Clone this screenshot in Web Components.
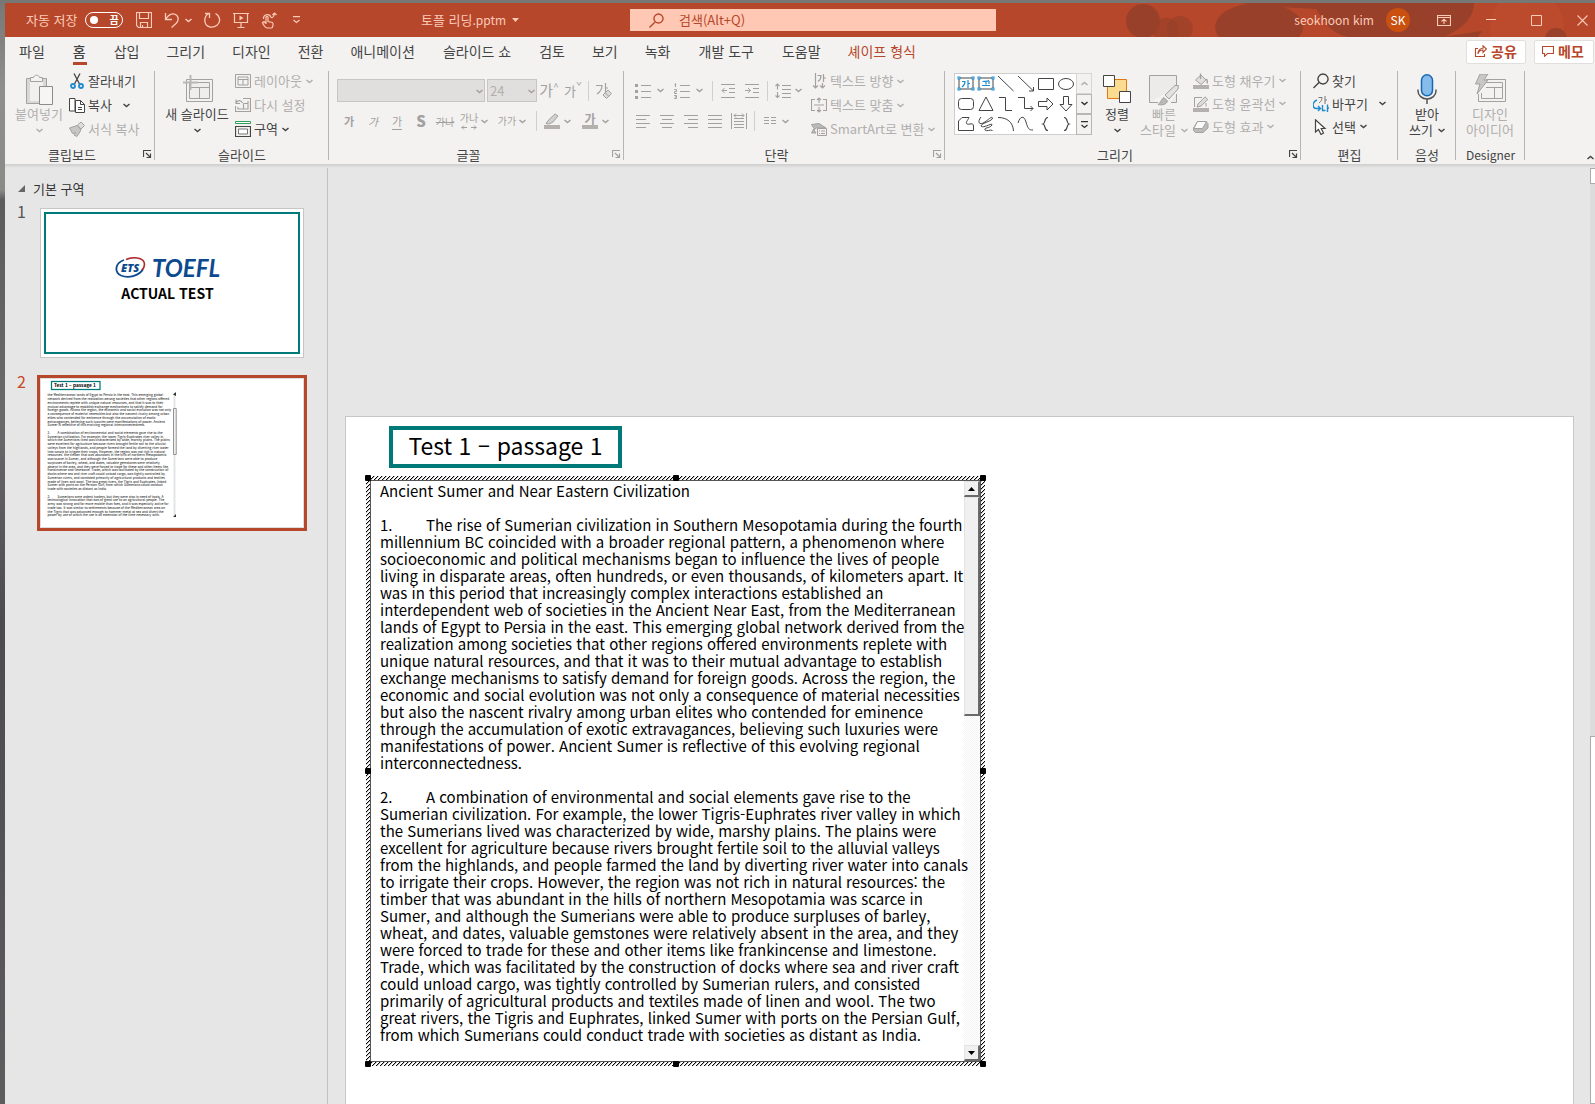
<!DOCTYPE html>
<html lang="ko">
<head>
<meta charset="utf-8">
<title>토플 리딩.pptm</title>
<style>
  html, body { margin: 0; height: 100%; }
  body {
    font-family: "Noto Sans CJK KR", "Noto Sans", sans-serif;
    font-size: 13px; line-height: 16px; color: #444; overflow: hidden;
    background: linear-gradient(180deg, #777876 0, #8f908d 90px, #8a8a88 190px, #5c5c5e 200px, #6a6a6d 420px, #4b4b50 620px, #5d5d60 100%);
  }
</style>
</head>
<body>
<ppt-window></ppt-window>
<script>
const G = '#a3a19f', D = '#444';
const line = (c, d, w = 1) => `<path d="${d}" fill="none" stroke="${c}" stroke-width="${w}"/>`;
const handles = ['2,3', '16,3', '2,14', '16,14'].map(p => { const [x, y] = p.split(','); return `<rect x="${x - 1}" y="${y - 1}" width="2" height="2" fill="#fff" stroke="#1e8bcd"/>`; }).join('');
const ICONS = {
  chev: [7, 5, `<path d="M.5 1 3.500 3.500 6.500 1" fill="none" stroke="currentColor" stroke-width="1.500"/>`],
  chevUp: [7, 5, `<path d="M.5 4 3.500 1.500 6.500 4" fill="none" stroke="currentColor" stroke-width="1.500"/>`],
  chevBar: [7, 8, `<path d="M0 .5H7M.5 4 3.500 6.500 6.500 4" fill="none" stroke="currentColor" stroke-width="1.300"/>`],
  caret: [7, 4, `<path d="M0 0H7L3.500 4Z" fill="currentColor"/>`],
  launch: [9, 9, line('currentColor', 'M.5 7V.5H8M3 3 7 7M7.500 3.500V7.500H3.500', 1.2)],
  save: [16, 16, line('currentColor', 'M.5.5H15.500V15.500H2.500L.5 13.500ZM3.500.5V6.500H12.500V.5M4.500 15.500V10.500H11.500V15.500M6.500 13V15', 1.2)],
  undo: [16, 16, line('currentColor', 'M1.500 1V7.500H8M1.500 7.500C4 3 8 .5 11.500 2.500 15.500 5 14.500 9 12 11.500L7.500 15.500', 1.3)],
  redo: [17, 16, line('currentColor', 'M5 1.500C-1 4.500-.5 13.500 6 15 11 16 16.500 12 15.500 7 15 4.500 13.500 2.500 11.500 1.500M1 1.500H5.500V6', 1.3)],
  present: [16, 17, line('currentColor', 'M0 1.500H16M1.500 1.500V10.500H14.500V1.500M8 10.500V15.500M4.500 15.500H11.500', 1.2) + '<path d="M6.500 3.500V8.500L10.500 6Z" fill="currentColor"/>'],
  touch: [16, 17, line('currentColor', 'M5 12V5.500C5 4 7 4 7 5.500V9.500L11.500 10.500C12.500 11 12 16 10.500 16H6C4.500 16 2 12.500 1.500 10.500L3 9.500 5 11.500M2.500 7A4 4 0 0 1 9 3.500C10 7 13 6 13.500 1.500M11.500 3 13.500 1 15.500 3', 1.2)],
  search: [15, 15, line('currentColor', 'M.5 14.500 5.800 9.200M9.500 1A4.500 4.500 0 1 1 9.490 1Z', 1.4)],
  ribbonOpt: [14, 11, line('currentColor', 'M.5.5H13.500V10.500H.5ZM.5 2.500H13.500M7 9V4.500M4.500 6.500 7 4.200 9.500 6.500', 1.1)],
  min: [10, 10, line('currentColor', 'M0 4.500H10')],
  max: [11, 11, line('currentColor', 'M.5.5H10.500V10.500H.5Z')],
  close: [11, 11, line('currentColor', 'M.5.5 10.500 10.500M10.500.5.5 10.500', 1.1)],
  share: [13, 13, line('currentColor', 'M4 3.500H1.500V11.500H10.500V9M4 9C4.500 6 7 5 9 5V7.500L12.500 4 9 .8V3.200C6 3.200 4 5.500 4 9Z', 1.1)],
  memo: [12, 11, line('currentColor', 'M.5.5H11.500V7.500H5.500L2.500 10.300V7.500H.5Z', 1.1)],
  paste: [28, 32, `<path d="M1.500 4.500H21.500V29.500H1.500Z" fill="#d9d8d7" stroke="${G}"/><path d="M5 7H18V27H5Z" fill="#f1f0ef"/><path d="M5.500 7.500V3.500H8.500C9 .5 14 .5 14.500 3.500H17.500V7.500Z" fill="#f3f2f1" stroke="${G}"/><path d="M14.500 12.500H27.500V30.500H14.500Z" fill="#f6f5f4" stroke="#8d8b89"/>`],
  cut: [16, 16, line(D, 'M5 .5 10.500 11M11 .5 5.500 11', 1.3) + `<g fill="none" stroke="#1e8bcd" stroke-width="1.800"><circle cx="4" cy="13" r="2"/><circle cx="12" cy="13" r="2"/></g>`],
  copy: [16, 16, `<path d="M6 14H.5V1.500H4L6 1.500V14" fill="#fff" stroke="${D}"/><path d="M6.500 3.500H11.500L15.500 7.500V15.500H6.500Z" fill="#fff" stroke="${D}"/>` + line(D, 'M11.500 3.500V7.500H15.500M9 10.500H13M9 12.500H13')],
  brush: [16, 16, `<path d="M.5 7 8 4.500 12 9 8 15.500 5 14 6.500 11.500 3.500 12.500Z" fill="#c9c7c5" stroke="${G}"/><path d="M8.500 4 12 1 15.500 4.500 12 8Z" fill="#dedddc" stroke="${G}"/>`],
  newSlide: [32, 32, `<path d="M5.500 5.500H31.500V27.500H5.500Z" fill="#f3f2f1" stroke="${G}"/><path d="M8.500 8.500H28.500V24.500H8.500Z" fill="#efeeed" stroke="${G}"/>` + line(G, 'M8.500 13.500H28.500M18.500 13.500V24.500') + line('#b9b7b5', 'M2 8.500H17M9.500 1V16', 2)],
  layout: [16, 14, line(G, 'M.5.5H15.500V13.500H.5ZM3 3H13V11H3ZM3 5.500H13M8 5.500V11')],
  reset: [16, 14, line(G, 'M8 .5H15.500V13.500H.5V8M13 3V11H3V9M8.500 5.500H13M8.500 5.500V11M1 5.500C2 2 6 1.500 7.500 5M1 1.500V5.500H5', 1.1)],
  section: [16, 16, `<path d="M.5.5H15.500V2.500H.5Z" fill="#fff" stroke="#2f9e5b"/>` + line(D, 'M.5 5.500H15.500V15.500H.5Z', 1.2) + `<path d="M3.500 8H12.500V13H3.500Z" fill="#fff" stroke="#777"/>`],
  clearFmt: [16, 16, line(G, 'M0 2.500H6C6 6 4 9 1 11M9.500 0V9M9.500 5H12', 1.2) + `<path d="M7 12 12 7 15.500 10.500 10.500 15.500Z" fill="#dcdbda" stroke="${G}"/>` + line(G, 'M9 9.500 13 13.500')],
  pen: [16, 16, `<path d="M2 10.500 5 6.500 11 1 14 3 9 9 5 11Z" fill="#d3d1cf" stroke="${G}"/><path d="M0 12H16V16H0Z" fill="#b3b0ad"/>`],
  bullets: [16, 16, [1, 7, 13].map(y => `<rect x="0" y="${y}" width="3" height="3" fill="${G}"/>` + line(G, `M6 ${y + 1.5}H16`)).join('')],
  numbers: [16, 16, line(G, 'M.5 1.500 1.500.5V4M.2 6.500H2.500V8.500H.5V10.500H3M.2 12.500H2.500V15.500H.2M.8 14H2.500M6 2.500H16M6 8.500H16M6 14.500H16')],
  outdent: [16, 16, line(G, 'M1 1.500H15M9 5.500H15M9 9.500H15M1 14.500H15M2 7.500H7M4.500 5 2 7.500 4.500 10')],
  indent: [16, 16, line(G, 'M1 1.500H15M9 5.500H15M9 9.500H15M1 14.500H15M1 7.500H6M4 5 6.500 7.500 4 10')],
  spacing: [16, 16, line(G, 'M7 2.500H16M7 6.500H16M7 10.500H16M7 14.500H16M2.500 1V6.500M.5 3 2.500 1 4.500 3M2.500 9V14.500M.5 12.500 2.500 14.500 4.500 12.500', 1.1)],
  left: [16, 16, line(G, 'M1 2.500H15M1 6.500H11M1 10.500H15M1 14.500H11')],
  center: [16, 16, line(G, 'M1 2.500H15M3 6.500H13M1 10.500H15M3 14.500H13')],
  right: [16, 16, line(G, 'M1 2.500H15M5 6.500H15M1 10.500H15M5 14.500H15')],
  justify: [16, 16, line(G, 'M1 2.500H15M1 6.500H15M1 10.500H15M1 14.500H15')],
  distribute: [16, 16, line(G, 'M.5 0V16M15.500 0V16M3 5.500H13M3 8.500H13M3 11.500H13M3 14.500H13M3 2.500H13M5 .5 3 2.500 5 4.500M11 .5 13 2.500 11 4.500')],
  columns: [14, 8, line(G, 'M1 .5H6M1 3.500H6M1 6.500H6M8 .5H13M8 3.500H13M8 6.500H13')],
  spread: [16, 5, line(G, 'M.5 2.500H6M10 2.500H15.500M3 .5 1 2.500 3 4.500M13 .5 15 2.500 13 4.500')],
  textDir: [16, 16, line(G, 'M4.500 0V14.500M2 12.500 4.500 15 7 12.500M11.500 10V15M9 12.500 11.500 15 14 12.500M6.500 2.500H10C10 5 9 7 7 8.500M12.500 1V9M12.500 5H15', 1.2)],
  textAlign: [16, 16, line(G, 'M4 2.500H.5V13.500H4M12 2.500H15.500V13.500H12M3 8H13M8 1V6M8 10V15M6 3 8 1 10 3M6 13 8 15 10 13', 1.1)],
  smartart: [16, 14, `<path d="M.5 2.500 8 1.500 15 6H5L3 8 5 11H.5L3 6.500Z" fill="#bdbbb9" stroke="${G}"/><path d="M6.500 6.500H15.500V13.500H6.500Z" fill="#f3f2f1" stroke="${G}"/>` + line(G, 'M8 9H9M10 9H14M8 11.500H9M10 11.500H14')],
  arrange: [28, 32, `<path d="M4.500 5.500H23.500V24.500H4.500Z" fill="#fbdb8f" stroke="#e07a10"/><path d="M.5 1.500H11.500V12.500H.5ZM16.500 17.500H27.500V28.500H16.500Z" fill="#fff" stroke="${D}"/>`],
  quick: [30, 32, `<path d="M.5 28.500V1.500H27.500V13M27.500 20V28.500H22M.5 28.500H9" fill="#ecebea" stroke="${G}"/><path d="M16 21 26 11.500 29.500 11.500 29 15 20 25Z" fill="#e3e2e1" stroke="${G}"/><path d="M9 30.500C12 29 12 25 15 23.500L18.500 27C17.500 30.500 13 31.500 9 30.500Z" fill="#bbb9b7" stroke="${G}"/>`],
  fill: [16, 16, `<path d="M2.500 7 8 2 13 7 8 11.500Z" fill="#e0dfde" stroke="${G}"/>` + line(G, 'M7.500 6V.5M13 6C15 7 14.500 9 14 10.500', 1.3) + `<path d="M0 12H16V16H0Z" fill="#b3b0ad"/>`],
  outline: [16, 16, line(G, 'M9 1.500H1.500V11M13 7V10.500') + `<path d="M4 11 5 8 12 .8 14.800 3.500 8 10Z" fill="#dddcdb" stroke="${G}"/><path d="M0 12H16V16H0Z" fill="#b3b0ad"/>`],
  effect: [16, 14, `<path d="M4.500 1.500H13L15 3.500V8L10 12.500H2.500L.5 10.500V8Z" fill="#bdbbb9" stroke="${G}"/><path d="M4.500 1.500H13.500L9.500 8.500H.8Z" fill="#fafafa" stroke="${G}"/>`],
  find: [16, 16, line(D, 'M.5 15 6 9.500M10 1A5 5 0 1 1 9.990 1Z', 1.4)],
  replace: [16, 16, line('#777', 'M5.500 1.500H9C9 4 8 5.500 6 7M12 0V8M12 4H14') + line('#1e8bcd', 'M4 4C-1 6-1 12 3 12.500H7M5 10 7.500 12.500 5 15M9.500 9V14.500H12.500M14.500 8.500V16M14.500 12H16', 1.4)],
  select: [16, 16, `<path d="M2.500.8V13L5.500 10.500 8 15.500 10.500 14 8.200 9.500H12Z" fill="#fff" stroke="${D}" stroke-width="1.200"/>`],
  mic: [20, 32, `<rect x="4.500" y=".8" width="11" height="21" rx="5.500" fill="#86bcec" stroke="#1668b3" stroke-width="1.500"/>` + line('#555', 'M1 15.500V17A9 8 0 0 0 19 17V15.500M10 25V30', 1.5)],
  designer: [32, 32, line(G, 'M12 5.500H31.500V27.500H4.500V20M12 8.500H28.500V24.500H7.500V19M12 13.500H28.500M20.500 13.500V24.500') + `<path d="M6 0 14 0 10 6 14 6 3 20 6 10 1.500 10Z" fill="#c9c7c5" stroke="${G}"/>`],
  tbox: [18, 18, `<path d="M2 3H16V14H2Z" fill="#fff" stroke="${D}"/>${handles}` + line('#1e8bcd', 'M5 6.500H8C8 9 7 10.500 5 12M11 5V13M11 8.500H13', 1.2)],
  vbox: [18, 18, `<path d="M2 3H16V14H2Z" fill="#fff" stroke="${D}"/>${handles}` + line('#1e8bcd', 'M5.500 6.500C8 6 10 7 12 5.500M9 6.500V9.500M12 6V9M5 10.500H13', 1.2)],
  ln: [18, 18, line(D, 'M1 1 16.500 16')],
  lnArrow: [18, 18, line(D, 'M1 1 16 15.500M16.500 12V16H12')],
  rect: [18, 18, `<path d="M1.500 3.500H16.500V14.500H1.500Z" fill="#fff" stroke="${D}"/>`],
  oval: [18, 18, `<ellipse cx="9" cy="9" rx="7.500" ry="5.500" fill="#fff" stroke="${D}"/>`],
  rrect: [18, 18, `<rect x="1.500" y="3.500" width="15" height="11" rx="3" fill="#fff" stroke="${D}"/>`],
  tri: [18, 18, `<path d="M9 2 16 15.500H2Z" fill="#fff" stroke="${D}"/>`],
  elbow: [18, 18, line(D, 'M2 2.500H8.500V15.500H15')],
  elbowA: [18, 18, line(D, 'M1 2.500H7.500V13.500H16M13.500 11 16 13.500 13.500 16')],
  arrR: [18, 18, `<path d="M1.500 6.500H10V3L16 9 10 15V11.500H1.500Z" fill="#fff" stroke="${D}"/>`],
  arrD: [18, 18, `<path d="M6.500 1.500V9.500H3L9 16 15 9.500H11.500V1.500Z" fill="#fff" stroke="${D}"/>`],
  free: [18, 18, `<path d="M1.500 15.500V6L5 2.500H12C11 5 8 8 10 9 12 10 16.500 7 16.500 11V15.500Z" fill="#fff" stroke="${D}"/>`],
  scrib: [18, 18, line(D, 'M4 2C0 7 2 11 8 7 12 4 15 1 15.500 3 16 6 4 8 4 11 6 14 16 7 15 10 12 14 7 12 8 15 10 17 13 14 15.500 15.500')],
  arc: [18, 18, line(D, 'M1 2.500C10 2.500 16 7 16.500 16')],
  curve: [18, 18, line(D, 'M1 8C3 1 7 0 9 7 11 14 12 15 16 15')],
  braceL: [18, 18, line(D, 'M11 2.500C7 2 9 8 6 9 9 10 7 16 11 15.500', 1.2)],
  braceR: [18, 18, line(D, 'M7 2.500C11 2 9 8 12 9 9 10 11 16 7 15.500', 1.2)],
};

function define(name, html, after) {
  const t = document.createElement('template');
  customElements.define(name, class extends HTMLElement {
    constructor() { super(); this.attachShadow({ mode: 'open' }); }
    connectedCallback() {
      if (this.shadowRoot.childNodes.length) return;
      t.innerHTML = typeof html === 'function' ? html(this) : html;
      this.shadowRoot.append(t.content.cloneNode(true));
      if (after) after(this);
    }
  });
}
const BTN = 'button{font:inherit;color:inherit;background:none;border:0;padding:0;margin:0;text-align:inherit}';
const ico = n => `<ui-icon name="${n}"></ui-icon>`;

define('ui-icon', el => {
  const [w, h, m] = ICONS[el.getAttribute('name')];
  return `<style>:host{display:block;flex:none}svg{display:block}</style><svg width="${w}" height="${h}" viewBox="0 0 ${w} ${h}" aria-hidden="true">${m}</svg>`;
});

/* Small ribbon command: icon, caption, optional menu arrow */
define('rb-cmd', el => `<style>:host{display:block;height:var(--row,24px)}:host([off]){color:#b1afad}
  ${BTN}button{display:flex;align-items:center;box-sizing:border-box;height:100%;padding:0 0 2px 4px;white-space:nowrap}
  .i{width:19px}.m{margin-left:4px}:host([wide]) .m{margin-left:11px}</style>
  <button type="button"><span class="i">${ico(el.getAttribute('icon'))}</span><slot></slot>${el.hasAttribute('menu') ? `<span class="m">${ico('chev')}</span>` : ''}</button>`);

/* Large ribbon command: picture above one or two caption lines */
define('rb-big', el => `<style>:host{display:block;width:var(--w,52px);flex:none}:host([off]){color:#b1afad}
  ${BTN}button{display:flex;flex-direction:column;align-items:center;width:100%;padding-top:4px;white-space:nowrap}
  .p{height:32px}.l2{display:flex;align-items:center;gap:5px;height:16px}</style>
  <button type="button"><span class="p">${ico(el.getAttribute('icon'))}</span><slot></slot><span class="l2"><slot name="l2"></slot>${el.hasAttribute('menu') ? ico('chev') : ''}</span></button>`);

/* Icon-only tool, optionally split with a menu arrow */
define('rb-tool', el => `<style>:host{display:block;flex:none;height:24px;color:#a3a19f}
  ${BTN}button{display:flex;align-items:center;justify-content:center;width:24px;height:24px}
  :host([menu]) button{justify-content:flex-start;padding-left:4px;width:var(--split,38px);gap:var(--gap,4px)}
  :host([menu]) .i{width:16px;display:flex;justify-content:center}</style>
  <button type="button" aria-label="${el.getAttribute('label') || ''}"><span class="i">${el.hasAttribute('icon') ? ico(el.getAttribute('icon')) : '<slot></slot>'}</span>${el.hasAttribute('menu') ? ico('chev') : ''}</button>`);

define('rb-sep', '<style>:host{display:block;flex:none;width:1px;height:20px;margin:0 3px;background:#d2d0ce}</style>');

define('rb-group', el => `<style>:host{display:flex;flex-direction:column;flex:none;box-sizing:border-box;padding-top:4px;height:98px;position:relative;width:${el.getAttribute('width')}px}
  .c{display:flex;height:75px;align-items:flex-start;padding-left:var(--pad,8px)}
  .f{display:flex;height:19px;align-items:center}.t{flex:1;text-align:center}:host([latin]) .t{font-size:12px}
  ${BTN}.go{width:16px;display:flex;justify-content:center}:host([dim]) .go{color:#a3a19f}
  i{position:absolute;right:0;top:5px;bottom:4px;width:1px;background:#b8b6b4}</style>
  <div class="c"><slot></slot></div><div class="f"><span class="t">${el.getAttribute('label')}</span>${el.hasAttribute('go') ? `<button class="go" type="button" aria-label="${el.getAttribute('label')} 옵션">${ico('launch')}</button>` : ''}</div><i></i>`);

define('ppt-titlebar', `<style>:host{display:flex;align-items:center;height:34px;background:#b7472a;color:#fbcab8;position:relative;overflow:hidden}
  ${BTN}.art{position:absolute;right:0;top:0}
  .qat{display:flex;align-items:center;width:416px;flex:none;padding-left:21px;box-sizing:border-box}
  .sw{display:flex;align-items:center;gap:8px}
  .sw input{appearance:none;margin:0;width:8px;height:8px;border-radius:50%;background:#fff}
  .pill{display:flex;align-items:center;gap:11px;box-sizing:border-box;width:38px;height:16px;padding-left:4px;border:1px solid #fff;border-radius:8px;color:#fff;font-size:10px;font-weight:700;line-height:12px}
  .tools{display:flex;align-items:center;gap:12px;margin-left:13px}.u{display:flex;align-items:center;gap:5px}
  .last{margin-left:4px}
  .name{display:flex;align-items:center;gap:6px;width:209px;flex:none}.name b{font-weight:400}.name span{font-size:12px}
  .find{display:flex;align-items:center;gap:15px;width:366px;height:22px;flex:none;box-sizing:border-box;padding-left:19px;background:#ffc8b4;color:#b7472a}
  .find input{flex:1;border:0;background:none;outline:0;padding:0;font:inherit;color:inherit}.find input::placeholder{color:#b7472a;opacity:1}
  .me{display:flex;align-items:center;margin-left:auto;position:relative;font-size:12px}
  .av{display:grid;place-items:center;width:24px;height:24px;border-radius:50%;background:#ca5010;color:#fff;margin:0 27px 0 12px}
  .win{display:flex;align-items:center;gap:35px;margin-right:7px}</style>
  <svg class="art" width="505" height="34" viewBox="0 0 505 34" aria-hidden="true">
   <path d="M0 0H505V34H0Z" fill="#b7472a"/><circle cx="437" cy="24" r="37" fill="#c04c2e" opacity=".6"/><g fill="#99402a"><circle cx="53" cy="18" r="17"/><circle cx="76" cy="28" r="13" opacity=".7"/><circle cx="90" cy="26" r="13" opacity=".7"/><ellipse cx="169" cy="24" rx="44" ry="24"/><path d="M150 0H384C384 14 374 25 354 34H258C238 30 232 14 226 6L190 4ZM352 34 392 28 388 34Z"/><circle cx="466" cy="36" r="11"/></g></svg>
  <div class="qat"><label class="sw">자동 저장<span class="pill"><input type="checkbox" role="switch">끔</span></label>
   <div class="tools"><button type="button" aria-label="저장">${ico('save')}</button><button class="u" type="button" aria-label="실행 취소">${ico('undo')}${ico('chev')}</button><button type="button" aria-label="다시 실행">${ico('redo')}</button><button type="button" aria-label="슬라이드 쇼">${ico('present')}</button><button type="button" aria-label="터치 모드">${ico('touch')}</button><button class="last" type="button" aria-label="사용자 지정">${ico('chevBar')}</button></div></div>
  <button class="name" type="button"><b>토플 리딩<span>.pptm</span></b> ${ico('caret')}</button>
  <label class="find">${ico('search')}<input type="search" aria-label="검색" placeholder="검색(Alt+Q)"></label>
  <div class="me"><span>seokhoon kim</span><span class="av">SK</span>
   <div class="win"><button type="button" aria-label="리본 표시 옵션">${ico('ribbonOpt')}</button><button type="button" aria-label="최소화">${ico('min')}</button><button type="button" aria-label="최대화">${ico('max')}</button><button type="button" aria-label="닫기">${ico('close')}</button></div></div>`);

define('ppt-tabs', `<style>:host{display:flex;align-items:center;height:29px;font-size:14px}
  nav{display:flex;flex:1}a{color:inherit;text-decoration:none;padding:0 14px;height:29px;line-height:28px;position:relative;white-space:nowrap}
  a:nth-child(n+4){padding:0 14px 0 13px}a.w:nth-child(n+4){padding:0 15px 0 14px}
  .on{font-weight:500}.on::after{content:"";position:absolute;left:14px;right:13px;bottom:1px;height:3px;background:#b7472a}.ctx{color:#b7472a}
  ${BTN}.b{display:flex;align-items:center;gap:4px;box-sizing:border-box;width:60px;height:24px;line-height:20px;padding:0 0 1px 7px;margin-left:8px;border:1px solid #e1dfdd;border-radius:2px;background:#fff;color:#b7472a;font-weight:700}
  .b:last-child{margin-right:1px}</style>
  <nav><a href="#">파일</a><a href="#" class="on">홈</a><a href="#">삽입</a><a href="#">그리기</a><a href="#">디자인</a><a href="#">전환</a><a href="#">애니메이션</a><a href="#" class="w">슬라이드 쇼</a><a href="#">검토</a><a href="#">보기</a><a href="#">녹화</a><a href="#" class="w">개발 도구</a><a href="#">도움말</a><a href="#" class="ctx">셰이프 형식</a></nav>
  <button class="b" type="button">${ico('share')}공유</button><button class="b" type="button">${ico('memo')}메모</button>`);

define('shape-gallery', () => {
  const s = ['tbox', 'vbox', 'ln', 'lnArrow', 'rect', 'oval', 'rrect', 'tri', 'elbow', 'elbowA', 'arrR', 'arrD', 'free', 'scrib', 'arc', 'curve', 'braceL', 'braceR'];
  return `<style>:host{display:flex;flex:none;margin-top:3px;height:62px;width:138px;box-sizing:border-box}${BTN}
  .g{display:grid;grid-template-columns:repeat(6,20px);grid-auto-rows:20px;border:1px solid #d0cecc;border-right:0;background:#fff;padding-left:1px}
  .g button{display:grid;place-items:center}.s{display:grid;flex:1;grid-template-rows:1fr 1fr 1fr}.s button{display:grid;place-items:center;border:1px solid #b8b6b4;color:#333}.s button:first-child{border-color:#d8d6d4;color:#b1afad}</style>
  <div class="g">${s.map(n => `<button type="button" aria-label="${n}">${ico(n)}</button>`).join('')}</div>
  <div class="s"><button type="button" aria-label="위로">${ico('chevUp')}</button><button type="button" aria-label="아래로">${ico('chev')}</button><button type="button" aria-label="자세히">${ico('chevBar')}</button></div>`;
});

define('font-select', el => `<style>:host{display:block;position:relative;width:var(--w);height:23px;flex:none;color:#a3a19f}
  select{appearance:none;width:100%;height:100%;box-sizing:border-box;border:1px solid #c8c6c4;border-radius:0;background:#e1dfdd;color:#b1afad;font:inherit;line-height:20px;padding:0 0 0 2px;opacity:1}
  ui-icon{position:absolute;right:2px;top:10px;pointer-events:none}</style>
  <select disabled aria-label="${el.getAttribute('label')}"><option>${el.getAttribute('value')}</option></select>${ico('chev')}`);

define('ppt-ribbon', `<style>:host{display:flex;height:98px;position:relative}
  .col{display:flex;flex-direction:column}.rows{display:flex;flex-direction:column;gap:7px;padding-top:9px}.r{display:flex;align-items:center;height:23px}.r+.r{height:24px}
  .k{font-size:11px;line-height:13px}.b{font-weight:700}.i{font-style:italic}.u{border-bottom:1px solid #a3a19f}.st{font-size:10px;text-decoration:line-through;white-space:nowrap}
  .sm{font-size:10px;white-space:nowrap;line-height:12px}.sp{display:flex;flex-direction:column;align-items:center;gap:2px;font-size:10px;line-height:11px;white-space:nowrap}
  .s{font-weight:900;font-size:15px}.big{font-size:15px}.ar{font-size:10px;vertical-align:5px;line-height:8px}.clr{font-weight:700;font-size:12px;line-height:12px;border-bottom:4px solid #b3b0ad;width:16px;text-align:center;display:block}
  ${BTN}.up{position:absolute;right:0;bottom:4px;width:8px;overflow:hidden}</style>
  <rb-group label="클립보드" width="150" go>
    <rb-big icon="paste" off menu>붙여넣기</rb-big>
    <div class="col"><rb-cmd icon="cut">잘라내기</rb-cmd><rb-cmd icon="copy" menu wide>복사</rb-cmd><rb-cmd icon="brush" off>서식 복사</rb-cmd></div>
  </rb-group>
  <rb-group label="슬라이드" width="174">
    <rb-big icon="newSlide" menu style="--w:68px">새 슬라이드</rb-big>
    <div class="col"><rb-cmd icon="layout" off menu>레이아웃</rb-cmd><rb-cmd icon="reset" off>다시 설정</rb-cmd><rb-cmd icon="section" menu>구역</rb-cmd></div>
  </rb-group>
  <rb-group label="글꼴" width="295" go dim>
    <div class="rows">
      <div class="r"><font-select label="글꼴" value="" style="--w:148px"></font-select><font-select label="글꼴 크기" value="24" style="--w:50px;margin-left:2px"></font-select><rb-tool><span class="big">가<span class="ar">^</span></span></rb-tool><rb-tool><span>가<span class="ar">ˇ</span></span></rb-tool><rb-sep></rb-sep><rb-tool icon="clearFmt" label="서식 지우기"></rb-tool></div>
      <div class="r"><rb-tool><span class="k b">가</span></rb-tool><rb-tool><span class="k i">가</span></rb-tool><rb-tool><span class="k u">가</span></rb-tool><rb-tool><span class="s">S</span></rb-tool><rb-tool><span class="st">가나</span></rb-tool><rb-tool menu><span class="sp">가나${ico('spread')}</span></rb-tool><rb-tool menu><span class="sm">가가</span></rb-tool><rb-sep></rb-sep><rb-tool icon="pen" label="강조 색" menu></rb-tool><rb-tool menu><span class="clr">가</span></rb-tool></div>
    </div>
  </rb-group>
  <rb-group label="단락" width="321" go dim style="--pad:7px">
    <div class="rows" style="width:176px">
      <div class="r"><rb-tool icon="bullets" label="글머리 기호" menu style="--split:39px;--gap:6px"></rb-tool><rb-tool icon="numbers" label="번호 매기기" menu style="--split:39px;--gap:6px"></rb-tool><rb-sep></rb-sep><rb-tool icon="outdent" label="내어쓰기"></rb-tool><rb-tool icon="indent" label="들여쓰기"></rb-tool><rb-sep></rb-sep><rb-tool icon="spacing" label="줄 간격" menu></rb-tool></div>
      <div class="r"><rb-tool icon="left" label="왼쪽 맞춤"></rb-tool><rb-tool icon="center" label="가운데 맞춤"></rb-tool><rb-tool icon="right" label="오른쪽 맞춤"></rb-tool><rb-tool icon="justify" label="양쪽 맞춤"></rb-tool><rb-tool icon="distribute" label="균등 분할"></rb-tool><rb-sep></rb-sep><rb-tool icon="columns" label="단" menu></rb-tool></div>
    </div>
    <div class="col"><rb-cmd icon="textDir" off menu>텍스트 방향</rb-cmd><rb-cmd icon="textAlign" off menu>텍스트 맞춤</rb-cmd><rb-cmd icon="smartart" off menu>SmartArt로 변환</rb-cmd></div>
  </rb-group>
  <rb-group label="그리기" width="356" go style="--pad:9px;--row:23px">
    <shape-gallery></shape-gallery>
    <rb-big icon="arrange" menu style="--w:44px;margin-left:3px">정렬</rb-big>
    <rb-big icon="quick" off menu style="--w:50px">빠른<span slot="l2">스타일</span></rb-big>
    <div class="col"><rb-cmd icon="fill" off menu>도형 채우기</rb-cmd><rb-cmd icon="outline" off menu>도형 윤곽선</rb-cmd><rb-cmd icon="effect" off menu>도형 효과</rb-cmd></div>
  </rb-group>
  <rb-group label="편집" width="97" style="--row:23px">
    <div class="col"><rb-cmd icon="find">찾기</rb-cmd><rb-cmd icon="replace" menu wide>바꾸기</rb-cmd><rb-cmd icon="select" menu>선택</rb-cmd></div>
  </rb-group>
  <rb-group label="음성" width="58" style="--pad:3px"><rb-big icon="mic" menu>받아<span slot="l2">쓰기</span></rb-big></rb-group>
  <rb-group label="Designer" latin width="69" style="--pad:8px"><rb-big icon="designer" off>디자인<span slot="l2">아이디어</span></rb-big></rb-group>
  <button class="up" type="button" aria-label="리본 축소">${ico('chevUp')}</button>`);

const P1 = `1.	The rise of Sumerian civilization in Southern Mesopotamia during the fourth
millennium BC coincided with a broader regional pattern, a phenomenon where
socioeconomic and political mechanisms began to influence the lives of people
living in disparate areas, often hundreds, or even thousands, of kilometers apart. It
was in this period that increasingly complex interactions established an
interdependent web of societies in the Ancient Near East, from the Mediterranean
lands of Egypt to Persia in the east. This emerging global network derived from the
realization among societies that other regions offered environments replete with
unique natural resources, and that it was to their mutual advantage to establish
exchange mechanisms to satisfy demand for foreign goods. Across the region, the
economic and social evolution was not only a consequence of material necessities
but also the nascent rivalry among urban elites who contended for eminence
through the accumulation of exotic extravagances, believing such luxuries were
manifestations of power. Ancient Sumer is reflective of this evolving regional
interconnectedness.`;
const P2 = `2.	A combination of environmental and social elements gave rise to the
Sumerian civilization. For example, the lower Tigris-Euphrates river valley in which
the Sumerians lived was characterized by wide, marshy plains. The plains were
excellent for agriculture because rivers brought fertile soil to the alluvial valleys
from the highlands, and people farmed the land by diverting river water into canals
to irrigate their crops. However, the region was not rich in natural resources: the
timber that was abundant in the hills of northern Mesopotamia was scarce in
Sumer, and although the Sumerians were able to produce surpluses of barley,
wheat, and dates, valuable gemstones were relatively absent in the area, and they
were forced to trade for these and other items like frankincense and limestone.
Trade, which was facilitated by the construction of docks where sea and river craft
could unload cargo, was tightly controlled by Sumerian rulers, and consisted
primarily of agricultural products and textiles made of linen and wool. The two
great rivers, the Tigris and Euphrates, linked Sumer with ports on the Persian Gulf,
from which Sumerians could conduct trade with societies as distant as India.`;
const MINI = `the Mediterranean lands of Egypt to Persia in the east. This emerging global
network derived from the realization among societies that other regions offered
environments replete with unique natural resources, and that it was to their
mutual advantage to establish exchange mechanisms to satisfy demand for
foreign goods. Across the region, the economic and social evolution was not only
a consequence of material necessities but also the nascent rivalry among urban
elites who contended for eminence through the accumulation of exotic
extravagances, believing such luxuries were manifestations of power. Ancient
Sumer is reflective of this evolving regional interconnectedness.

2.	A combination of environmental and social elements gave rise to the
Sumerian civilization. For example, the lower Tigris-Euphrates river valley in
which the Sumerians lived was characterized by wide, marshy plains. The plains
were excellent for agriculture because rivers brought fertile soil to the alluvial
valleys from the highlands, and people farmed the land by diverting river water
into canals to irrigate their crops. However, the region was not rich in natural
resources: the timber that was abundant in the hills of northern Mesopotamia
was scarce in Sumer, and although the Sumerians were able to produce
surpluses of barley, wheat, and dates, valuable gemstones were relatively
absent in the area, and they were forced to trade for these and other items like
frankincense and limestone. Trade, which was facilitated by the construction of
docks where sea and river craft could unload cargo, was tightly controlled by
Sumerian rulers, and consisted primarily of agricultural products and textiles
made of linen and wool. The two great rivers, the Tigris and Euphrates, linked
Sumer with ports on the Persian Gulf, from which Sumerians could conduct
trade with societies as distant as India.

3.	Sumerians were ardent traders, but they were also in need of tools. A
technological innovation that was of great use to an agricultural people. The
army was strong and far more mobile than foes, and it was especially active for
trade too. It was similar to settlements because of the Mediterranean area on
the Tigris that was advanced enough to hammer metal at sea and divert the
power by use of which the use is an extension of the time necessary with.`;

define('slide-list', `<style>:host{display:block;width:323px;flex:none;box-sizing:border-box;border-right:1px solid #c0c0c0;padding:12px 20px 0 12px}
  h2{display:flex;align-items:center;gap:8px;margin:0 0 8px 1px;font:inherit;color:#333;height:17px}
  .row{display:flex}.n{width:20px;flex:none;font-size:16px;line-height:12px;color:#555}
  .t{box-sizing:border-box;width:270px;height:156px;border:3px solid transparent}
  .f{box-sizing:border-box;width:264px;height:150px;background:#fff;border:1px solid #c6c6c6}
  .one .f{padding:3px}.in{box-sizing:border-box;height:142px;border:2px solid #007a78;display:flex;flex-direction:column;align-items:center;padding:42px 9px 0 0}
  .two{margin-top:14px}.two .n{color:#c8472a}.two .t{border-color:#b7472a}.two .f{border-color:#ddd}
  .logo{display:flex;align-items:center;gap:5px;height:24px}.logo b{font:italic 700 24px/24px Lato,sans-serif;color:#0b4a8f}
  .logo svg{display:block}strong{font-size:14px;line-height:26px;color:#000}.mini{display:block}</style>
  <h2><svg width="7" height="7" viewBox="0 0 7 7"><path d="M7 0V7H0Z" fill="#666"/></svg>기본 구역</h2>
  <div class="row one"><span class="n">1</span><div class="t"><div class="f"><div class="in">
    <div class="logo"><svg width="32" height="22" viewBox="0 0 32 22"><path d="M9 3C0 6-1 15 6 18.500 14 22 25 18 28 12" fill="none" stroke="#0b4a8f" stroke-width="1.800"/><path d="M11 2.500C18-.5 27 .5 29 5 30 8 29 11 27 13" fill="none" stroke="#b02a30" stroke-width="1.600"/><text x="6" y="15" font-family="Open Sans" font-size="11" font-weight="800" font-style="italic" fill="#0b4a8f">ETS</text></svg><b>TOEFL</b></div>
    <strong>ACTUAL TEST</strong></div></div></div></div>
  <div class="row two"><span class="n">2</span><div class="t"><div class="f"><svg class="mini" width="262" height="148" viewBox="4 4 1048 592">
    <rect x="46" y="14" width="194" height="32" fill="#fff" stroke="#007a78" stroke-width="5"/><text x="56" y="36" font-size="19" font-weight="700">Test 1 – passage 1</text>
    <g id="m" font-size="13" fill="#000"></g>
    <path d="M538 60V556" stroke="#e4e4e4" stroke-width="8"/><path d="M534 122H545V306H534Z" fill="#eee" stroke="#777" stroke-width="3"/><path d="M532 66 544 56V72ZM532 556H544V544" fill="#333"/></svg></div></div></div>`, el => {
  const g = el.shadowRoot.getElementById('m');
  MINI.split('\n').forEach((t, i) => {
    const [n, rest] = t.includes('\t') ? t.split('\t') : ['', t];
    const put = (x, s) => { const e = document.createElementNS('http://www.w3.org/2000/svg', 'text'); e.setAttribute('x', x); e.setAttribute('y', 73 + i * 15); e.textContent = s; g.append(e); };
    if (n) put(30, n);
    if (rest) put(n ? 70 : 30, rest);
  });
});

/* Text box control placed on the slide, shown selected */
define('passage-box', el => `<style>:host{display:block;position:relative;box-sizing:border-box;width:619px;height:590px;padding:4px}
  .h{position:absolute;inset:0;width:100%;height:100%}
  .b{display:flex;position:relative;height:100%;box-sizing:border-box;border:1px solid #555;background:#fff}
  textarea{flex:1;position:relative;z-index:1;border:0;outline:0;resize:none;overflow:hidden;margin:0 -6px 0 0;padding:1px 0 0 9px;background:none;white-space:pre;font:15px/17px "Noto Sans CJK KR",sans-serif;color:#000;tab-size:46px}
  .s{display:flex;flex-direction:column;width:16px;background:repeating-conic-gradient(#f4f4f4 0 25%,#fff 0 50%) 0 0/2px 2px}
  button{padding:0;width:16px;height:16px;flex:none;display:grid;place-items:center;color:#000}
  button,.th{box-sizing:border-box;background:#f0f0f0;border:1px solid;border-color:#e3e3e3 #696969 #696969 #e3e3e3;border-right-width:2px;border-bottom-width:2px}.th{height:219px;margin-bottom:auto}
  i{position:absolute;width:6px;height:6px;background:#000;border-radius:1px}
  .l{left:-1px}.c{left:calc(50% - 3px)}.r{right:-1px}.t{top:-1px}.m{top:calc(50% - 3px)}.d{bottom:-1px}</style>
  <svg class="h" aria-hidden="true"><defs><pattern id="k" width="4" height="4" patternUnits="userSpaceOnUse"><path d="M0 0H4V4H0Z" fill="#fff"/><path d="M3 0H4V1H3ZM2 1H3V2H2ZM1 2H2V3H1ZM0 3H1V4H0Z" fill="#000"/><path d="M0 0H1V1H0ZM3 1H4V2H3ZM2 2H3V3H2ZM1 3H2V4H1Z" fill="#bbb"/></pattern></defs><rect width="100%" height="100%" fill="url(#k)"/></svg>
  <div class="b"><textarea aria-label="지문" spellcheck="false" readonly></textarea><div class="s"><button type="button" aria-label="위로"><svg width="7" height="4"><path d="M0 4H7L3.500 0Z"/></svg></button><div class="th"></div><button type="button" aria-label="아래로">${ico('caret')}</button></div></div>
  <i class="l t"></i><i class="c t"></i><i class="r t"></i><i class="l m"></i><i class="r m"></i><i class="l d"></i><i class="c d"></i><i class="r d"></i>`,
  el => { el.shadowRoot.querySelector('textarea').value = `Ancient Sumer and Near Eastern Civilization\n\n${P1}\n\n${P2}`; });

define('slide-stage', `<style>:host{display:flex;flex:1;min-width:0}
  .a{flex:1;display:flex;padding:248px 16px 0 17px}
  .p{flex:1;box-sizing:border-box;background:#fff;border:1px solid #c6c6c6;border-bottom:0;padding:9px 0 0 20px}
  h1{box-sizing:border-box;width:233px;height:42px;border:4px solid #007a78;margin:0 0 8px 23px;font-size:23px;font-weight:400;line-height:31px;text-align:center;color:#000;white-space:nowrap}
  .v{width:5px;background:#dcdcdc;display:flex;flex-direction:column;overflow:hidden}
  .v b{height:14px;border:1px solid #ababab;border-right:0;background:#fff}.v u{flex:1;margin-top:552px;border:1px solid #ababab;border-right:0;background:#fff}</style>
  <div class="a"><div class="p"><h1>Test 1 – passage 1</h1><passage-box></passage-box></div></div><div class="v"><b></b><u></u></div>`);

define('ppt-window', `<style>:host{display:flex;flex-direction:column;height:100vh;box-sizing:border-box;padding:3px 0 0 5px}
  .bar{background:#f3f2f1}.sh{height:4px;background:linear-gradient(#cdcdcd,#e6e6e6)}
  .m{flex:1;min-height:0;display:flex;overflow:hidden}.w{display:flex;flex-direction:column;flex:1;min-height:0;background:#e6e6e6}</style>
  <div class="w"><ppt-titlebar></ppt-titlebar><div class="bar"><ppt-tabs></ppt-tabs><ppt-ribbon></ppt-ribbon></div><div class="sh"></div><div class="m"><slide-list></slide-list><slide-stage></slide-stage></div></div>`);
</script>
</body>
</html>
